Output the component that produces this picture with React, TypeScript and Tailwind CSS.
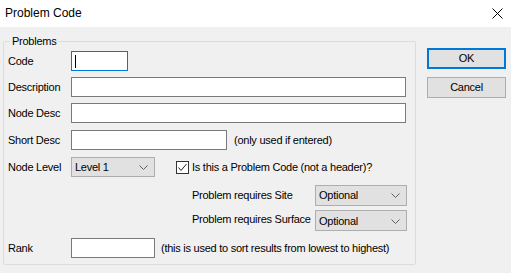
import React from 'react';

const font = { fontFamily: '"Liberation Sans", Arial, sans-serif' };

const Chevron = () => (
  <svg width="9" height="5" viewBox="0 0 9 5" className="shrink-0">
    <path d="M0.5 0.5 L4.5 4.5 L8.5 0.5" fill="none" stroke="#606060" strokeWidth="1" />
  </svg>
);

const Select = ({ value, className }: { value: string; className: string }) => (
  <div className={`flex items-center justify-between bg-[#e1e1e1] border border-[#adadad] pl-[3px] pr-[6px] ${className}`}>
    <span>{value}</span>
    <Chevron />
  </div>
);

const Input = ({ className }: { className: string }) => (
  <div className={`bg-white border border-[#7a7a7a] h-[20px] ${className}`} />
);

const Row = ({ label, children, className = '' }: { label: string; children: React.ReactNode; className?: string }) => (
  <div className={`flex items-center ${className}`}>
    <span className="w-[63px] shrink-0">{label}</span>
    {children}
  </div>
);

export default function App() {
  return (
    <div
      className="w-[511px] h-[273px] bg-[#f0f0f0] flex flex-col text-[11px] text-black tracking-[-0.25px] leading-[13px]"
      style={font}
    >
      {/* Title bar */}
      <div className="h-[27px] bg-white flex items-center justify-between pl-[5px] pr-[8px] shrink-0">
        <span className="text-[12px] tracking-normal">Problem Code</span>
        <svg width="11" height="11" viewBox="0 0 11 11">
          <path d="M0.5 0.5 L10.5 10.5 M10.5 0.5 L0.5 10.5" stroke="#000" strokeWidth="1" />
        </svg>
      </div>

      <div className="flex pl-[3px] pt-[8px]">
        {/* Group box */}
        <fieldset className="w-[413px] h-[230px] border border-[#dcdcdc] rounded-[2px]">
          <legend className="ml-[6px] px-[2px] leading-[13px]">Problems</legend>
          <div className="flex flex-col pl-[4px] pt-[3px]">
            <Row label="Code">
              <div className="w-[57px] h-[20px] bg-white border border-[#0078d7] flex items-center pl-[3px]">
                <div className="w-px h-[13px] bg-black" />
              </div>
            </Row>
            <Row label="Description" className="mt-[6px]">
              <Input className="w-[335px]" />
            </Row>
            <Row label="Node Desc" className="mt-[6px]">
              <Input className="w-[335px]" />
            </Row>
            <Row label="Short Desc" className="mt-[7px]">
              <Input className="w-[156px]" />
              <span className="ml-[7px]">(only used if entered)</span>
            </Row>
            <Row label="Node Level" className="mt-[7px]">
              <Select value="Level 1" className="w-[84px] h-[20px]" />
              <div className="ml-[21px] w-[13px] h-[13px] border border-[#333] bg-white flex items-center justify-center">
                <svg width="11" height="11" viewBox="0 0 11 11">
                  <path d="M1.5 5.5 L4 8.5 L9.5 2" fill="none" stroke="#222" strokeWidth="1" />
                </svg>
              </div>
              <span className="ml-[3px]">Is this a Problem Code (not a header)?</span>
            </Row>
            <div className="flex flex-col pl-[184px] mt-[8px] gap-[4px]">
              <div className="flex items-center h-[21px]">
                <span className="w-[123px]">Problem requires Site</span>
                <Select value="Optional" className="w-[92px] h-[21px]" />
              </div>
              <div className="flex items-center h-[21px]">
                <span className="w-[123px] -mt-[3px]">Problem requires Surface</span>
                <Select value="Optional" className="w-[92px] h-[21px] pt-[2px]" />
              </div>
            </div>
            <Row label="Rank" className="mt-[7px]">
              <Input className="w-[84px]" />
              <span className="ml-[6px]">(this is used to sort results from lowest to highest)</span>
            </Row>
          </div>
        </fieldset>

        {/* Buttons */}
        <div className="flex flex-col ml-[11px] pt-[13px] gap-[8px]">
          <button className="w-[79px] h-[21px] bg-[#e1e1e1] border-2 border-[#0078d7] flex items-center justify-center">
            OK
          </button>
          <button className="w-[79px] h-[21px] bg-[#e1e1e1] border border-[#adadad] flex items-center justify-center">
            Cancel
          </button>
        </div>
      </div>
    </div>
  );
}
